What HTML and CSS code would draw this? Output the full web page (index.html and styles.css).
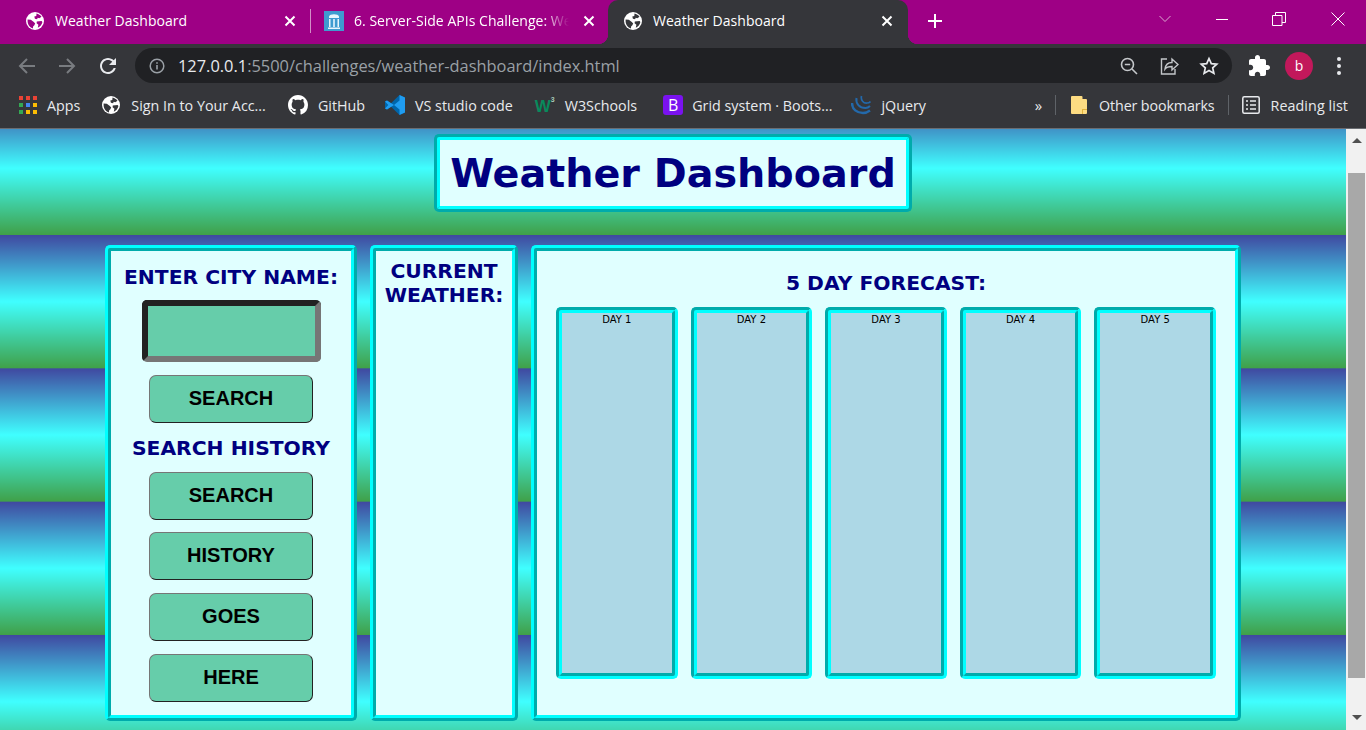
FILE: index.html
```html
<!DOCTYPE html>
<html lang="en">
<head>
    <meta charset="UTF-8">
    <meta name="viewport" content="width=device-width, initial-scale=1.0">
    <title>Weather Dashboard</title>
    <link rel="stylesheet" href="styles.css">
</head>
<body>

<svg class="defs" width="0" height="0">
    <symbol id="globe" viewBox="0 0 18 18">
        <circle cx="9" cy="9" r="9" fill="#fff"/>
        <path fill="var(--land)" d="M10.5 1.6c2 .4 3.8 1.6 5 3.2l-2.2 1.5-1.6-.6-.6 1.5-2.2-.4-.6-2.3 2-.6zM1.6 7.6l3.2.2 3 2.1 1.4 1.5-1 2-1 .8-.3 2.2C4 15.600 1.500 12.500 1.600 9zM10.800 9.500l4.800-.6.800 1.100c-.4 2.500-2.300 4.800-4.600 5.700l.6-3-1.800-1.500z"/>
    </symbol>
    <symbol id="close" viewBox="0 0 12 12">
        <path d="M1.500 1.500l9 9M10.500 1.500l-9 9" stroke="#fff" stroke-width="2" fill="none"/>
    </symbol>
</svg>

<header class="tabs">
    <div class="tab tab-first">
        <svg class="favicon land-purple"><use href="#globe"/></svg>
        <span class="tab-title">Weather Dashboard</span>
        <svg class="tab-close"><use href="#close"/></svg>
    </div>
    <div class="tab-sep"></div>
    <div class="tab tab-second">
        <svg class="favicon" viewBox="0 0 20 20">
            <rect width="20" height="20" fill="#3f9bd0"/>
            <path fill="#e8f6fd" d="M5 5.500C5.500 2.500 14.500 2.500 15 5.500v1.500H5zM5 8h1.500v8H5zM9.200 8h1.600v8H9.200zM13.500 8H15v8h-1.500zM4 16.500h12V18H4z"/>
        </svg>
        <span class="tab-title tab-title-fade">6. Server-Side APIs Challenge: Weather Dashboard</span>
        <svg class="tab-close"><use href="#close"/></svg>
    </div>
    <div class="tab tab-active">
        <svg class="favicon land-grey"><use href="#globe"/></svg>
        <span class="tab-title">Weather Dashboard</span>
        <svg class="tab-close"><use href="#close"/></svg>
    </div>
    <svg class="new-tab" viewBox="0 0 16 16"><path d="M8 1v14M1 8h14" stroke="#fff" stroke-width="2"/></svg>
    <div class="window-btns">
        <svg class="win-icon win-chevron" viewBox="0 0 12 8"><path d="M.5 1l5.500 5.500L11.500 1" stroke="#d9a8cf" fill="none"/></svg>
        <svg class="win-icon win-min" viewBox="0 0 14 14"><path d="M1 7.500h12" stroke="#fff"/></svg>
        <svg class="win-icon" viewBox="0 0 14 14"><path d="M.5 3.500h9.500v10H.5zM3.500 3.500V.5h10v10H10" stroke="#fff" fill="none"/></svg>
        <svg class="win-icon win-close" viewBox="0 0 14 14"><path d="M.5.5l13 13M13.500.5l-13 13" stroke="#fff" fill="none"/></svg>
    </div>
</header>

<nav class="toolbar">
    <div class="tool-btn">
        <svg width="20" height="20" viewBox="0 0 20 20"><path d="M18 10H3M10 3l-7 7 7 7" stroke="#797c80" stroke-width="2" fill="none"/></svg>
    </div>
    <div class="tool-btn">
        <svg width="20" height="20" viewBox="0 0 20 20"><path d="M2 10h15M10 3l7 7-7 7" stroke="#797c80" stroke-width="2" fill="none"/></svg>
    </div>
    <div class="tool-btn">
        <svg class="reload" width="24" height="24" viewBox="0 0 24 24"><path fill="#e8eaed" d="M17.650 6.350C16.200 4.900 14.210 4 12 4c-4.420 0-7.990 3.580-7.990 8s3.570 8 7.990 8c3.730 0 6.840-2.550 7.730-6h-2.080c-.82 2.330-3.040 4-5.650 4-3.310 0-6-2.690-6-6s2.690-6 6-6c1.660 0 3.140.69 4.220 1.780L13 11h7V4l-2.350 2.350z"/></svg>
    </div>
    <div class="omnibox">
        <svg class="omni-info" width="16" height="16" viewBox="0 0 16 16">
            <circle cx="8" cy="8" r="6.800" stroke="#9aa0a6" stroke-width="1.500" fill="none"/>
            <path d="M8 7v4.500M8 4.300v1.500" stroke="#9aa0a6" stroke-width="1.600"/>
        </svg>
        <span class="url"><span class="url-host">127.0.0.1</span>:5500/challenges/weather-dashboard/index.html</span>
        <div class="omni-actions">
            <svg width="20" height="20" viewBox="0 0 20 20"><circle cx="8.500" cy="8.500" r="6" stroke="#c4c7ca" stroke-width="1.600" fill="none"/><path d="M5.800 8.500h5.400M13 13l5 5" stroke="#c4c7ca" stroke-width="1.600"/></svg>
            <svg width="20" height="20" viewBox="0 0 20 20"><path d="M8 3H2.500v15h13.500v-5M6 13c.5-4 3-6.500 7-6.500V3l6 5.500-6 5.500v-3.500c-3 0-5.500.5-7 2.500z" stroke="#c4c7ca" stroke-width="1.400" fill="none"/></svg>
            <svg width="20" height="20" viewBox="0 0 20 20"><path d="M10 2.500l2.300 5.100 5.500.6-4.100 3.700 1.200 5.500-4.900-2.800-4.900 2.800 1.200-5.500-4.100-3.700 5.500-.6z" stroke="#e8eaed" stroke-width="1.700" fill="none"/></svg>
        </div>
    </div>
    <div class="tool-right">
        <div class="tool-btn">
            <svg width="24" height="24" viewBox="0 0 24 24"><path fill="#fff" d="M20.500 11H19V7c0-1.100-.9-2-2-2h-4V3.500C13 2.120 11.880 1 10.500 1S8 2.120 8 3.500V5H4c-1.100 0-1.990.9-1.990 2v3.800H3.500c1.490 0 2.700 1.210 2.700 2.700s-1.210 2.700-2.700 2.700H2V20c0 1.100.9 2 2 2h3.800v-1.500c0-1.490 1.210-2.700 2.700-2.700 1.490 0 2.700 1.210 2.700 2.700V22H17c1.100 0 2-.9 2-2v-4h1.500c1.380 0 2.500-1.120 2.500-2.500S21.880 11 20.500 11z"/></svg>
        </div>
        <div class="tool-btn"><span class="avatar">b</span></div>
        <div class="tool-btn">
            <svg width="6" height="20" viewBox="0 0 6 20"><circle cx="3" cy="3" r="2" fill="#e8eaed"/><circle cx="3" cy="10" r="2" fill="#e8eaed"/><circle cx="3" cy="17" r="2" fill="#e8eaed"/></svg>
        </div>
    </div>
</nav>

<nav class="bookmarks">
    <div class="bookmark bm-gap">
        <svg class="bm-icon" viewBox="0 0 18 18">
            <rect width="4" height="4" fill="#ea4335"/><rect x="7" width="4" height="4" fill="#ea4335"/><rect x="14" width="4" height="4" fill="#ea4335"/>
            <rect y="7" width="4" height="4" fill="#34a853"/><rect x="7" y="7" width="4" height="4" fill="#4285f4"/><rect x="14" y="7" width="4" height="4" fill="#fbbc04"/>
            <rect y="14" width="4" height="4" fill="#34a853"/><rect x="7" y="14" width="4" height="4" fill="#fbbc04"/><rect x="14" y="14" width="4" height="4" fill="#fbbc04"/>
        </svg>
        <span>Apps</span>
    </div>
    <div class="bookmark bm-gap">
        <svg class="bm-icon bm-icon-loose land-grey"><use href="#globe"/></svg>
        <span>Sign In to Your Acc...</span>
    </div>
    <div class="bookmark">
        <svg class="bm-icon bm-wide" viewBox="0 0 16 16"><path fill="#fff" d="M8 0C3.580 0 0 3.580 0 8c0 3.540 2.290 6.530 5.470 7.590.4.07.55-.17.55-.38 0-.19-.01-.82-.01-1.490-2.010.37-2.530-.49-2.690-.94-.09-.23-.48-.94-.82-1.130-.28-.15-.68-.52-.01-.53.63-.01 1.080.58 1.230.82.72 1.210 1.870.87 2.330.66.07-.52.28-.87.51-1.070-1.780-.2-3.640-.89-3.640-3.950 0-.87.31-1.590.82-2.150-.08-.2-.36-1.020.08-2.120 0 0 .67-.21 2.200.82.64-.18 1.320-.27 2-.27s1.360.09 2 .27c1.530-1.040 2.200-.82 2.200-.82.44 1.100.16 1.920.08 2.120.51.560.82 1.270.82 2.150 0 3.070-1.870 3.750-3.650 3.950.29.25.54.73.54 1.480 0 1.070-.01 1.930-.01 2.200 0 .21.15.46.55.38A8.010 8.010 0 0 0 16 8c0-4.420-3.580-8-8-8z"/></svg>
        <span>GitHub</span>
    </div>
    <div class="bookmark bm-gap">
        <svg class="bm-icon bm-wide" viewBox="0 0 20 20">
            <path fill="#0065a9" d="M14.500 0L20 2.500v15L14.500 20 5.800 11.500 2 14.500 0 13.500v-7l2-1 3.800 3z"/>
            <path fill="#1f9cf0" d="M14.500 0L20 2.500v15L14.500 20V14.500L9 10l5.500-4.500zM0 6.500L2 5.500 9 10l-7 4.500-2-1L3.300 10z"/>
        </svg>
        <span>VS studio code</span>
    </div>
    <div class="bookmark">
        <span class="w3-logo">W<span class="w3-sup">3</span></span>
        <span>W3Schools</span>
    </div>
    <div class="bookmark bm-bootstrap">
        <span class="bs-logo">B</span>
        <span>Grid system · Boots...</span>
    </div>
    <div class="bookmark">
        <svg class="bm-icon bm-wide" viewBox="0 0 20 20" fill="none" stroke="#2369ab">
            <path d="M1 8c0 6.500 5 10 11 10 3 0 5-1 7-2.500" stroke-width="2.400"/>
            <path d="M5.500 3c-1 5.500 3 10 9 10 2 0 3.500-1 4.500-2" stroke-width="2"/>
            <path d="M10.500 1c-1 4 2 7.500 5.500 7 1.500 0 2.500-.5 3.500-1.500" stroke-width="1.700"/>
        </svg>
        <span>jQuery</span>
    </div>
    <span class="bm-more">»</span>
    <div class="bm-sep"></div>
    <div class="bookmark bm-folder">
        <svg class="bm-folder-icon" viewBox="0 0 16 18"><path fill="#fddc82" d="M0 1a1 1 0 0 1 1-1h9.500a1 1 0 0 1 1 1v2H15a1 1 0 0 1 1 1v13a1 1 0 0 1-1 1H1a1 1 0 0 1-1-1z"/><path fill="#e2b33c" d="M11 13h5v1h-4v4h-1z"/></svg>
        <span class="bm-tight">Other bookmarks</span>
    </div>
    <div class="bm-sep bm-sep-right"></div>
    <div class="bookmark bm-reading">
        <svg class="bm-icon bm-icon-loose" viewBox="0 0 18 18" fill="none" stroke="#e8eaed" stroke-width="1.500"><rect x=".8" y=".8" width="16.400" height="16.400" rx="1.500"/><path d="M4 5h2M8 5h6M4 9h2M8 9h6M4 13h2M8 13h6"/></svg>
        <span class="bm-loose">Reading list</span>
    </div>
</nav>

<div class="viewport">
    <main class="page">
        <h1 class="page-title">Weather Dashboard</h1>

        <div class="dashboard">
            <section class="panel panel-search">
                <h2 class="panel-heading">ENTER CITY NAME:</h2>
                <input class="city-input" type="text" aria-label="City name">
                <button class="btn">SEARCH</button>
                <h2 class="panel-heading history-heading">SEARCH HISTORY</h2>
                <button class="btn">SEARCH</button>
                <button class="btn">HISTORY</button>
                <button class="btn">GOES</button>
                <button class="btn">HERE</button>
            </section>

            <section class="panel panel-current">
                <h2 class="panel-heading">CURRENT WEATHER:</h2>
            </section>

            <section class="panel panel-forecast">
                <h2 class="panel-heading">5 DAY FORECAST:</h2>
                <div class="forecast-grid">
                    <div class="day-card">DAY 1</div>
                    <div class="day-card">DAY 2</div>
                    <div class="day-card">DAY 3</div>
                    <div class="day-card">DAY 4</div>
                    <div class="day-card">DAY 5</div>
                </div>
            </section>
        </div>
    </main>

    <div class="scrollbar">
        <span class="arrow-up"></span>
        <div class="scroll-thumb"></div>
        <span class="arrow-down"></span>
    </div>
</div>

</body>
</html>
```

FILE: styles.css
```css
/* Browser frame */
* {
    box-sizing: border-box;
}

body {
    margin: 0;
    height: 730px;
    overflow: hidden;
    display: flex;
    flex-direction: column;
    font-family: "Open Sans", Arial, sans-serif;
    color: #e8eaed;
    background-color: #35363a;
}

.defs {
    position: absolute;
}

.land-purple {
    --land: #9e0085;
}

.land-grey {
    --land: #35363a;
}

.tabs {
    height: 44px;
    flex: none;
    display: flex;
    align-items: stretch;
    background-color: #9e0085;
}

.tab {
    display: flex;
    align-items: center;
    font-size: 14px;
    color: #fff;
    padding-bottom: 2px;
}

.tab-first {
    width: 309px;
    padding-left: 26px;
    padding-right: 13px;
}

.tab-second {
    width: 297px;
    padding-left: 13px;
    padding-right: 13px;
}

.tab-active {
    position: relative;
    width: 300px;
    padding-left: 16px;
    padding-right: 15px;
    background-color: #35363a;
    border-radius: 10px 10px 0 0;
}

.tab-active::before,
.tab-active::after {
    content: "";
    position: absolute;
    bottom: 0;
    width: 10px;
    height: 10px;
}

.tab-active::before {
    left: -10px;
    background: radial-gradient(circle at 0 0, #9e0085 10px, #35363a 10.500px);
}

.tab-active::after {
    right: -10px;
    background: radial-gradient(circle at 100% 0, #9e0085 10px, #35363a 10.500px);
}

.tab-sep {
    width: 1px;
    height: 24px;
    margin: 9px 0 0 1px;
    background-color: #d18fc7;
}

.favicon {
    width: 18px;
    height: 18px;
    flex: none;
    margin-right: 11px;
}

.tab-second .favicon {
    width: 20px;
    height: 20px;
    margin-right: 10px;
}

.tab-title {
    flex: 1;
    margin-bottom: 2px;
    letter-spacing: 0.03px;
    white-space: nowrap;
    overflow: hidden;
}

.tab-title-fade {
    -webkit-mask-image: linear-gradient(to right, #000 88%, transparent 100%);
    mask-image: linear-gradient(to right, #000 88%, transparent 100%);
}

.tab-close {
    width: 12px;
    height: 12px;
    flex: none;
    margin-left: 14px;
}

.new-tab {
    width: 16px;
    height: 16px;
    margin: 13px 0 0 19px;
}

.window-btns {
    margin-left: auto;
    display: flex;
    align-items: flex-start;
    padding: 12px 21px 0 0;
}

.win-icon {
    width: 14px;
    height: 14px;
    margin-left: 43px;
}

.win-chevron {
    width: 12px;
    height: 8px;
    margin-top: 3px;
}

.win-min {
    margin-left: 44px;
}

.win-close {
    margin-left: 45px;
}

.toolbar {
    height: 40px;
    flex: none;
    display: flex;
    align-items: center;
    padding: 4px 7px 1px;
}

.tool-btn {
    width: 40px;
    height: 35px;
    flex: none;
    display: flex;
    align-items: center;
    justify-content: center;
}

.reload {
    margin-left: 2px;
}

.omnibox {
    flex: 1;
    height: 35px;
    margin-left: 8px;
    padding: 0 13px 0 14px;
    display: flex;
    align-items: center;
    background-color: #202124;
    border-radius: 18px;
    font-size: 16.400px;
    color: #9aa0a6;
}

.omni-info {
    margin-right: 13px;
}

.url {
    white-space: nowrap;
}

.url-host {
    color: #e8eaed;
}

.omni-actions {
    margin-left: auto;
    display: flex;
    gap: 20px;
}

.tool-right {
    margin-left: 7px;
    display: flex;
}

.avatar {
    width: 28px;
    height: 28px;
    border-radius: 50%;
    background-color: #c2185b;
    color: #fff;
    font-size: 14px;
    display: flex;
    align-items: center;
    justify-content: center;
}

.bookmarks {
    height: 45px;
    flex: none;
    display: flex;
    align-items: center;
    padding: 0 18px 2px 19px;
    font-size: 14.300px;
    border-bottom: 1px solid #6a6d72;
}

.bookmark {
    display: flex;
    align-items: center;
    white-space: nowrap;
    margin-right: 20px;
}

.bm-gap {
    margin-right: 22px;
}

.bm-icon {
    width: 18px;
    height: 18px;
    flex: none;
    margin-right: 10px;
}

.bm-icon-loose {
    margin-right: 11px;
}

.bm-wide {
    width: 20px;
    height: 20px;
}

.bm-tight {
    letter-spacing: -0.13px;
}

.bm-loose {
    letter-spacing: 0.08px;
}

.w3-logo {
    width: 20px;
    height: 18px;
    margin-top: 3px;
    margin-right: 10px;
    color: #088a5c;
    font-family: "Liberation Sans", Arial, sans-serif;
    font-size: 17px;
    line-height: 18px;
    font-weight: bold;
    position: relative;
}

.w3-sup {
    position: absolute;
    top: -3px;
    left: 16px;
    font-size: 7px;
    line-height: 9px;
    color: #a8c9b8;
}

.bm-bootstrap {
    margin-left: 6px;
    margin-right: 19px;
}

.bs-logo {
    width: 20px;
    height: 20px;
    margin-right: 9px;
    border-radius: 3px;
    background-color: #7a12f0;
    color: #fff;
    font-size: 16px;
    text-align: center;
    line-height: 20px;
}

.bm-more {
    margin-left: auto;
    font-size: 15px;
}

.bm-sep {
    width: 1px;
    height: 20px;
    margin: 0 15px 0 13px;
    background-color: #5f6368;
}

.bm-folder {
    margin-right: 0;
}

.bm-folder-icon {
    width: 16px;
    height: 18px;
    margin-right: 12px;
}

.bm-sep-right {
    margin: 0 13px;
}

.bm-reading {
    margin-right: 0;
}

/* The page itself */
.viewport {
    flex: 1;
    min-height: 0;
    display: flex;
}

.page {
    flex: 1;
    display: flex;
    flex-direction: column;
    align-items: center;
    background-image: linear-gradient(#4048a0, #40ffff, #40a048);
    background-size: 100% 133.330px;
    background-position: 0 -27.330px;
}

.page-title {
    margin: 5px 0 33px;
    padding: 0 10px;
    height: 78px;
    line-height: 67px;
    font-family: "DejaVu Sans", Verdana, sans-serif;
    font-size: 39.700px;
    font-weight: bold;
    color: navy;
    background-color: lightcyan;
    border-width: 6px;
    border-color: aqua;
    border-style: groove ridge ridge groove;
    border-radius: 5px;
    white-space: nowrap;
}

.dashboard {
    display: flex;
    gap: 13px;
    height: 476px;
}

.panel {
    background-color: lightcyan;
    border: 6px ridge aqua;
    border-radius: 5px;
    text-align: center;
}

.panel-heading {
    margin: 0;
    font-family: "DejaVu Sans", Verdana, sans-serif;
    font-size: 20.300px;
    line-height: 24px;
    font-weight: bold;
    color: navy;
}

.panel-search {
    width: 252px;
    padding-top: 14px;
    display: flex;
    flex-direction: column;
    align-items: center;
}

.history-heading {
    margin: 0 0 12px;
}

.city-input {
    width: 179px;
    height: 62px;
    flex: none;
    margin: 11px 0 13px;
    background-color: mediumaquamarine;
    border-width: 6px;
    border-style: solid;
    border-color: #222 #767676 #767676 #222;
    border-radius: 5px;
}

.btn {
    width: 164px;
    height: 48px;
    flex: none;
    margin-bottom: 12.670px;
    padding: 0 0 1px;
    font-family: "Liberation Sans", Arial, sans-serif;
    font-size: 20px;
    font-weight: bold;
    color: #000;
    background-color: mediumaquamarine;
    border-width: 1px;
    border-style: solid;
    border-color: #767676 #222 #222 #767676;
    border-radius: 7px;
}

.panel-current {
    width: 148px;
    padding-top: 8px;
}

.panel-forecast {
    width: 710px;
    padding: 20px 19px 0;
}

.forecast-grid {
    display: grid;
    grid-template-columns: repeat(5, 1fr);
    gap: 13px;
    height: 372px;
    margin-top: 12px;
}

.day-card {
    padding-top: 1px;
    background-color: lightblue;
    border: 6px groove aqua;
    border-radius: 5px;
    font-family: "DejaVu Sans", Verdana, sans-serif;
    font-size: 10px;
    line-height: 12px;
    color: #000;
}

/* Scrollbar on the right of the page */
.scrollbar {
    width: 20px;
    flex: none;
    display: flex;
    flex-direction: column;
    align-items: center;
    padding: 9px 1px 7px 2px;
    background-color: #f1f1f1;
}

.arrow-up,
.arrow-down {
    width: 0;
    height: 0;
    border-left: 5px solid transparent;
    border-right: 5px solid transparent;
}

.arrow-up {
    border-bottom: 5px solid #505050;
}

.arrow-down {
    border-top: 5px solid #505050;
}

.scroll-thumb {
    width: 100%;
    height: 505px;
    margin: 30px 0 37px;
    background-color: #a8a8a8;
}
```
